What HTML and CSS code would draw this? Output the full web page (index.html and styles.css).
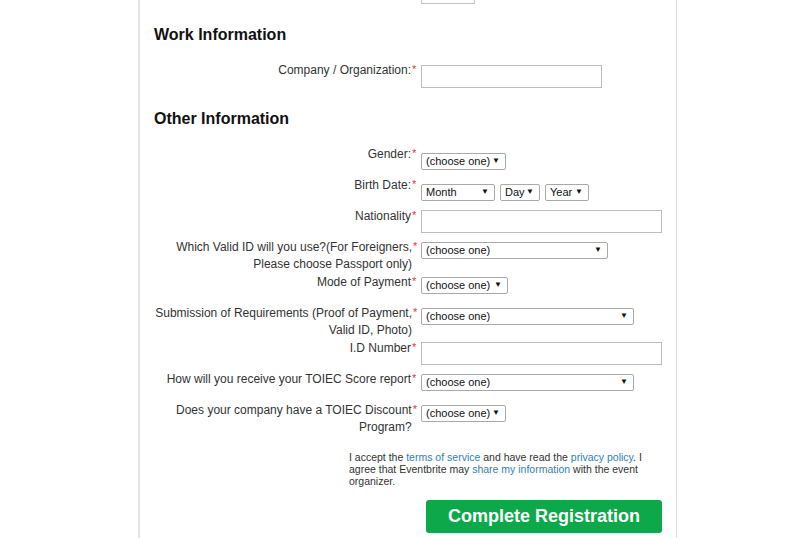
FILE: index.html
```html
<!DOCTYPE html>
<html lang="en">

<head>
    <meta charset="UTF-8">
    <meta name="viewport" content="width=device-width, initial-scale=1.0">
    <title>Event Registration</title>
    <link rel="stylesheet" href="styles.css">
</head>

<body>

    <div class="card">
        <!-- tail of the field above, page is scrolled -->
        <div class="prev-row"><div class="prev-field"></div></div>

        <h2>Work Information</h2>

        <div class="row">
            <div class="label"><span class="text">Company / Organization:</span><span class="req">*</span></div>
            <div class="control"><input type="text" class="field short"></div>
        </div>

        <h2>Other Information</h2>

        <div class="row">
            <div class="label"><span class="text">Gender:</span><span class="req">*</span></div>
            <div class="control low">
                <span class="select" style="width: 85px;"><select><option>(choose one)</option></select></span>
            </div>
        </div>

        <div class="row">
            <div class="label"><span class="text">Birth Date:</span><span class="req">*</span></div>
            <div class="control low dates">
                <span class="select" style="width: 74px;"><select><option>Month</option></select></span>
                <span class="select" style="width: 40px;"><select><option>Day</option></select></span>
                <span class="select" style="width: 44px;"><select><option>Year</option></select></span>
            </div>
        </div>

        <div class="row">
            <div class="label"><span class="text">Nationality</span><span class="req">*</span></div>
            <div class="control"><input type="text" class="field"></div>
        </div>

        <div class="row">
            <div class="label"><span class="text">Which Valid ID will you use?(For Foreigners, Please choose Passport only)</span><span class="req">*</span></div>
            <div class="control">
                <span class="select" style="width: 187px;"><select><option>(choose one)</option></select></span>
            </div>
        </div>

        <div class="row">
            <div class="label"><span class="text">Mode of Payment</span><span class="req">*</span></div>
            <div class="control">
                <span class="select" style="width: 87px;"><select><option>(choose one)</option></select></span>
            </div>
        </div>

        <div class="row">
            <div class="label"><span class="text">Submission of Requirements (Proof of Payment, Valid ID, Photo)</span><span class="req">*</span></div>
            <div class="control">
                <span class="select" style="width: 213px;"><select><option>(choose one)</option></select></span>
            </div>
        </div>

        <div class="row">
            <div class="label"><span class="text">I.D Number</span><span class="req">*</span></div>
            <div class="control"><input type="text" class="field"></div>
        </div>

        <div class="row">
            <div class="label"><span class="text">How will you receive your TOIEC Score report</span><span class="req">*</span></div>
            <div class="control">
                <span class="select" style="width: 213px;"><select><option>(choose one)</option></select></span>
            </div>
        </div>

        <div class="row">
            <div class="label"><span class="text">Does your company have a TOIEC Discount Program?</span><span class="req">*</span></div>
            <div class="control">
                <span class="select" style="width: 85px;"><select><option>(choose one)</option></select></span>
            </div>
        </div>

        <p class="terms">
            I accept the <a href="#">terms of service</a> and have read the <a href="#">privacy policy</a>. I
            agree that Eventbrite may <a href="#">share my information</a> with the event organizer.
        </p>

        <div class="actions">
            <button type="submit">Complete Registration</button>
        </div>
    </div>

</body>

</html>
```

FILE: styles.css
```css
body {
    font-family: "Liberation Sans", Arial, sans-serif;
    margin: 0;
    padding: 0;
    background-color: #fff;
    color: #222;
}

.card {
    margin-left: 138px;
    width: 508px;
    padding: 0 14px 10px 14px;
    border-left: 2px solid #e4e4e4;
    border-right: 1px solid #dcdcdc;
    min-height: 538px;
}

.prev-row {
    padding-left: 267px;
    padding-bottom: 4px;
}

.prev-field {
    width: 52px;
    height: 3px;
    border: 1px solid #c4c4c4;
    border-top: none;
}

h2 {
    font-size: 16px;
    line-height: 20px;
    font-weight: bold;
    color: #111;
    margin: 17px 0 17px 0;
}

.row {
    display: grid;
    grid-template-columns: 264px 1fr;
    column-gap: 3px;
    min-height: 30px;
    margin-bottom: 1px;
}

.label {
    display: flex;
    justify-content: flex-end;
    font-size: 12px;
    line-height: 17px;
    color: #333;
}

.label .text {
    text-align: right;
    max-width: 258px;
}

.req {
    color: #e8323c;
    font-size: 11px;
    line-height: 11px;
    margin: 2px 0 0 1px;
    width: 6px;
}

.control {
    padding-top: 3px;
}

.control.low {
    padding-top: 7px;
}

.dates {
    display: flex;
    gap: 5px;
}

.field {
    display: block;
    box-sizing: border-box;
    width: 241px;
    height: 23px;
    border: 1px solid #bdbdbd;
    margin: -1px 0 0 0;
    padding: 2px 4px;
    font-size: 12px;
}

.field.short {
    width: 181px;
    margin-top: 0;
}

.select {
    position: relative;
    display: inline-block;
    vertical-align: top;
}

.select select {
    appearance: none;
    -webkit-appearance: none;
    display: block;
    box-sizing: border-box;
    width: 100%;
    height: 17px;
    border: 1px solid #a9a9a9;
    border-radius: 2px;
    background: #fff;
    padding: 0 0 0 4px;
    font-family: "Liberation Sans", Arial, sans-serif;
    font-size: 11px;
    line-height: 15px;
    color: #111;
}

.select::after {
    content: "\25BC";
    position: absolute;
    right: 6px;
    top: 3px;
    font-size: 8px;
    line-height: 10px;
    color: #111;
    pointer-events: none;
}

.terms {
    margin: 15px 0 0 195px;
    width: 305px;
    font-size: 10.5px;
    line-height: 12px;
    color: #333;
}

.terms a {
    color: #2e7fb8;
    text-decoration: none;
}

.actions {
    display: flex;
    justify-content: flex-end;
    margin-top: 13px;
}

button {
    width: 236px;
    height: 33px;
    font-family: "Liberation Sans", Arial, sans-serif;
    font-size: 18px;
    font-weight: bold;
    color: white;
    background-color: #0ca84a;
    border: none;
    border-radius: 3px;
    cursor: pointer;
}
```
